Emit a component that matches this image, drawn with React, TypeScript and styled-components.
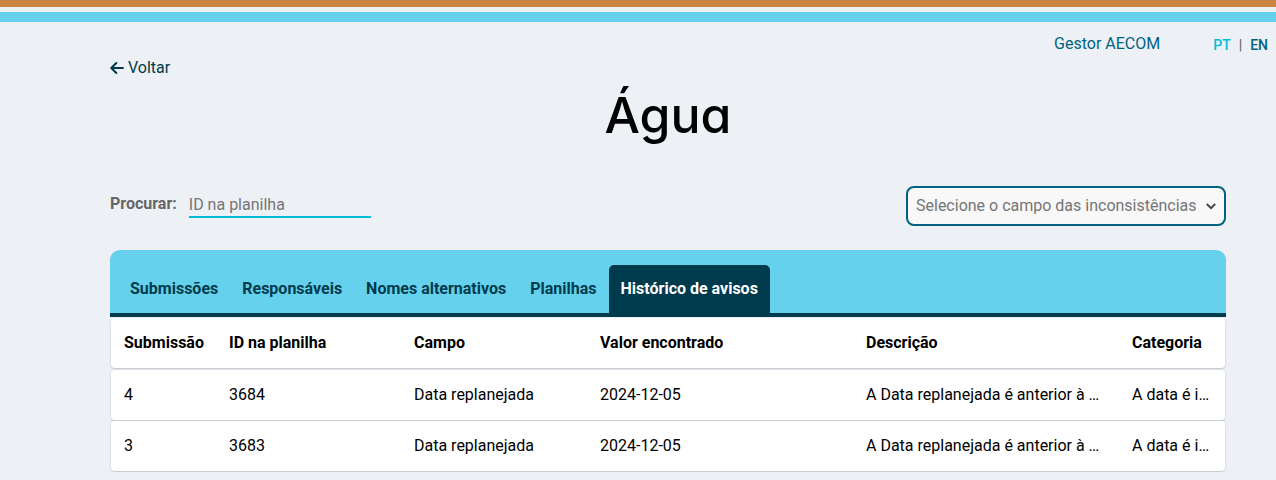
import React from "react";
import styled, { createGlobalStyle } from "styled-components";

const color = {
  page: "#edf1f6",
  orange: "#cb8443",
  sky: "#65d1ec",
  navy: "#003b4d",
  teal: "#006280",
  cyan: "#00bdd6",
  grey: "#666666",
  placeholder: "#757575",
};

const GlobalStyle = createGlobalStyle`
  *, *::before, *::after { box-sizing: border-box; }
  body {
    margin: 0;
    background: ${color.page};
    color: #000;
    font-family: Roboto, "Liberation Sans", sans-serif;
    font-size: 16px;
    line-height: 24px;
  }
  button, input, select { font: inherit; }
`;

const Stripe = styled.div<{ $color: string; $height: number }>`
  height: ${(p) => p.$height}px;
  background: ${(p) => p.$color};
`;

const Stripes = styled.div`
  display: grid;
  gap: 5px;
`;

const UserBar = styled.header`
  display: flex;
  justify-content: flex-end;
  align-items: flex-start;
  gap: 53px;
  padding: 10px 8px 0 0;
`;

const UserLink = styled.a`
  color: ${color.teal};
  text-decoration: none;
`;

const Languages = styled.nav`
  display: flex;
  gap: 8px;
  padding-top: 3px;
  color: ${color.grey};
  font-size: 14px;
  font-weight: 500;
  line-height: 20px;
`;

const LanguageButton = styled.button<{ $active?: boolean }>`
  padding: 0;
  border: 0;
  background: none;
  color: ${(p) => (p.$active ? color.cyan : color.teal)};
  cursor: pointer;
`;

const Content = styled.main`
  padding: 0 50px 0 110px;
`;

const BackLink = styled.a`
  display: inline-flex;
  align-items: center;
  gap: 4px;
  color: ${color.navy};
  text-decoration: none;
  vertical-align: top;
`;

const Title = styled.h1`
  margin: 0 0 36px;
  font-family: Inter, "Liberation Sans", sans-serif;
  font-feature-settings: "cv11";
  font-size: 50px;
  font-weight: 500;
  line-height: 70px;
  text-align: center;
`;

const Filters = styled.div`
  display: flex;
  justify-content: space-between;
  align-items: flex-start;
  margin-bottom: 24px;
`;

const SearchField = styled.div`
  display: flex;
  gap: 12px;
  padding-top: 6px;
`;

const SearchLabel = styled.label`
  color: ${color.grey};
  font-weight: 700;
`;

const SearchInput = styled.input`
  width: 182px;
  height: 26px;
  padding: 0;
  border: 0;
  border-bottom: 2px solid ${color.cyan};
  background: none;
  outline: none;
  &::placeholder {
    color: ${color.placeholder};
    opacity: 1;
  }
`;

const SelectBox = styled.div`
  position: relative;
  width: 320px;
`;

const FieldSelect = styled.select`
  display: block;
  width: 100%;
  height: 40px;
  padding: 0 26px 0 8px;
  border: 2px solid ${color.teal};
  border-radius: 8px;
  background: #f8f8f8;
  color: ${color.placeholder};
  appearance: none;
`;

const SelectArrow = styled.svg`
  position: absolute;
  right: 10px;
  top: 15px;
  pointer-events: none;
`;

const Tabs = styled.div`
  display: flex;
  padding: 15px 8px 0;
  border-bottom: 4px solid ${color.navy};
  border-radius: 10px 10px 0 0;
  background: ${color.sky};
`;

const Tab = styled.button<{ $active: boolean }>`
  height: 48px;
  padding: 0 12px;
  border: 0;
  border-radius: 5px 5px 0 0;
  background: ${(p) => (p.$active ? color.navy : "transparent")};
  color: ${(p) => (p.$active ? "#fff" : color.navy)};
  font-weight: 700;
  cursor: pointer;
`;

const Table = styled.table`
  display: block;
  padding: 1px;
`;

const RowGroup = styled.tbody`
  display: grid;
  gap: 1px;
`;

const HeadGroup = styled(RowGroup).attrs({ as: "thead" })`
  margin-bottom: 2px;
`;

const Row = styled.tr`
  display: grid;
  grid-template-columns:
    minmax(0, 105fr) minmax(0, 185fr) minmax(0, 186fr)
    minmax(0, 266fr) minmax(0, 266fr) minmax(0, 93fr);
  align-items: center;
  height: 50px;
  padding-left: 13px;
  border-radius: 4px;
  background: #fff;
  box-shadow: 0 1px 2px rgba(0, 0, 0, 0.2);
`;

const Cell = styled.td`
  overflow: hidden;
  padding: 0 32px 0 0;
  text-align: left;
  text-overflow: ellipsis;
  white-space: nowrap;
  &:first-child {
    padding-right: 16px;
  }
  &:last-child {
    padding-right: 14px;
  }
`;

const tabs = ["Submissões", "Responsáveis", "Nomes alternativos", "Planilhas", "Histórico de avisos"];
const columns = ["Submissão", "ID na planilha", "Campo", "Valor encontrado", "Descrição", "Categoria"];
const rows = ["4", "3"].map((id) => [
  id,
  `368${id}`,
  "Data replanejada",
  "2024-12-05",
  "A Data replanejada é anterior à data",
  "A data é inválida",
]);

export default function App() {
  const [active, setActive] = React.useState("Histórico de avisos");
  return (
    <>
      <GlobalStyle />
      <Stripes>
        <Stripe $color={color.orange} $height={7} />
        <Stripe $color={color.sky} $height={10} />
      </Stripes>
      <UserBar>
        <UserLink href="#perfil">Gestor AECOM</UserLink>
        <Languages aria-label="Idioma">
          <LanguageButton $active>PT</LanguageButton>
          <span>|</span>
          <LanguageButton>EN</LanguageButton>
        </Languages>
      </UserBar>
      <Content>
        <BackLink href="#voltar">
          <svg width="14" height="14" viewBox="0 0 14 14" fill="none" stroke="currentColor" strokeWidth="2" strokeLinecap="round" strokeLinejoin="round" aria-hidden="true">
            <path d="M13 7H1.5M6.3 2l-5 5 5 5" />
          </svg>
          Voltar
        </BackLink>
        <Title>Água</Title>
        <Filters>
          <SearchField>
            <SearchLabel htmlFor="search">Procurar:</SearchLabel>
            <SearchInput id="search" placeholder="ID na planilha" />
          </SearchField>
          <SelectBox>
            <FieldSelect aria-label="Campo das inconsistências">
              <option>Selecione o campo das inconsistências</option>
            </FieldSelect>
            <SelectArrow width="10" height="10" viewBox="0 0 10 10" fill="none" stroke="#444" strokeWidth="2" aria-hidden="true">
              <path d="M0.8 3l4.2 4.2L9.2 3" />
            </SelectArrow>
          </SelectBox>
        </Filters>
        <Tabs role="tablist">
          {tabs.map((name) => (
            <Tab key={name} role="tab" aria-selected={name === active} $active={name === active} onClick={() => setActive(name)}>
              {name}
            </Tab>
          ))}
        </Tabs>
        <Table>
          <HeadGroup>
            <Row>
              {columns.map((name) => (
                <Cell as="th" scope="col" key={name}>{name}</Cell>
              ))}
            </Row>
          </HeadGroup>
          <RowGroup>
            {rows.map((row) => (
              <Row key={row[0]}>
                {row.map((value, i) => (
                  <Cell key={columns[i]}>{value}</Cell>
                ))}
              </Row>
            ))}
          </RowGroup>
        </Table>
      </Content>
    </>
  );
}
